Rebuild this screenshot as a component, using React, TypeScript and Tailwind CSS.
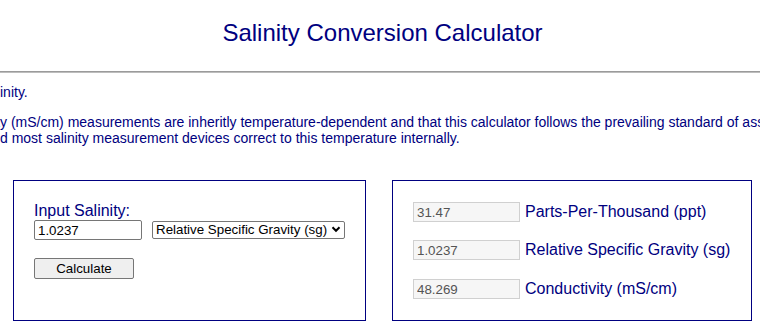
import { useState } from 'react';

interface Reading {
  value: string;
  label: string;
}

const readings: Reading[] = [
  { value: '31.47', label: 'Parts-Per-Thousand (ppt)' },
  { value: '1.0237', label: 'Relative Specific Gravity (sg)' },
  { value: '48.269', label: 'Conductivity (mS/cm)' },
];

// a line of the intro whose start runs off the left edge of the window
function CutLine({ hidden, shown }: { hidden: string; shown: string }) {
  return (
    <div className="flex whitespace-nowrap">
      <span className="flex w-0 justify-end">
        <span className="shrink-0">{hidden}</span>
      </span>
      <span>{shown}</span>
    </div>
  );
}

export default function App() {
  const [salinity, setSalinity] = useState('1.0237');
  const [unit, setUnit] = useState('sg');

  return (
    <div className="h-[332px] w-[760px] overflow-hidden bg-white font-['Liberation_Sans',Arial,sans-serif] text-[#000080]">
      <h1 className="pl-[5px] pt-[19px] text-center text-[24px] font-normal leading-[28px]">
        Salinity Conversion Calculator
      </h1>
      <hr className="mt-[24px] border-t border-b border-t-[#9b9b9b] border-b-[#bdbdbd]" />

      {/* INTRO */}
      <div className="mt-[11px] text-[14px] leading-[16px]">
        <CutLine hidden="Use this calculator to convert between the common measures of sal" shown="inity." />
        <div className="mt-[14px]">
          <CutLine
            hidden="Please note that conductivit"
            shown="y (mS/cm) measurements are inheritly temperature-dependent and that this calculator follows the prevailing standard of assuming a reference temperature of 25°C,"
          />
          <CutLine
            hidden="an"
            shown="d most salinity measurement devices correct to this temperature internally."
          />
        </div>
      </div>

      {/* PANELS */}
      <div className="mt-[34px] flex gap-[26px] pl-[13px]">
        <div className="h-[141px] w-[353px] border border-[#000080] pl-[20px] pt-[21px]">
          <label className="block text-[16px] leading-[18px]">Input Salinity:</label>
          <div className="flex items-center gap-[10px]">
            <input
              value={salinity}
              onChange={(e) => setSalinity(e.target.value)}
              className="block h-[20px] w-[108px] rounded-[2px] border border-[#767676] px-[3px] text-[13.33px] text-black outline-none"
            />
            <div className="relative">
              <select
                value={unit}
                onChange={(e) => setUnit(e.target.value)}
                className="block h-[18px] w-[193px] appearance-none rounded-[2px] border border-[#767676] bg-white pl-[3px] text-[13.33px] leading-[16px] text-black outline-none"
              >
                <option value="ppt">Parts-Per-Thousand (ppt)</option>
                <option value="sg">Relative Specific Gravity (sg)</option>
                <option value="ms">Conductivity (mS/cm)</option>
              </select>
              <svg
                className="pointer-events-none absolute right-[4px] top-[5px]"
                width="10"
                height="7"
                viewBox="0 0 10 7"
              >
                <polyline points="1.5,1.3 5,4.8 8.5,1.3" fill="none" stroke="#000" strokeWidth="2" />
              </svg>
            </div>
          </div>
          <button className="mt-[18px] block h-[21px] w-[100px] rounded-[2px] border border-[#767676] bg-[#efefef] text-[13.33px] text-black">
            Calculate
          </button>
        </div>

        <div className="flex h-[141px] w-[360px] flex-col border border-[#000080] pl-[20px] pt-[21px]">
          {readings.map((r, i) => (
            <div
              key={r.label}
              className={
                i === 0
                  ? 'flex items-center gap-[5px]'
                  : i === 1
                    ? 'mt-[18px] flex items-center gap-[5px]'
                    : 'mt-[19px] flex items-center gap-[5px]'
              }
            >
              <input
                readOnly
                value={r.value}
                className="block h-[20px] w-[107px] border border-[#d0d0d0] bg-[#f6f6f6] px-[3px] text-[13.33px] text-[#545454] outline-none"
              />
              <span className="text-[16px] leading-[18px]">{r.label}</span>
            </div>
          ))}
        </div>
      </div>
    </div>
  );
}
